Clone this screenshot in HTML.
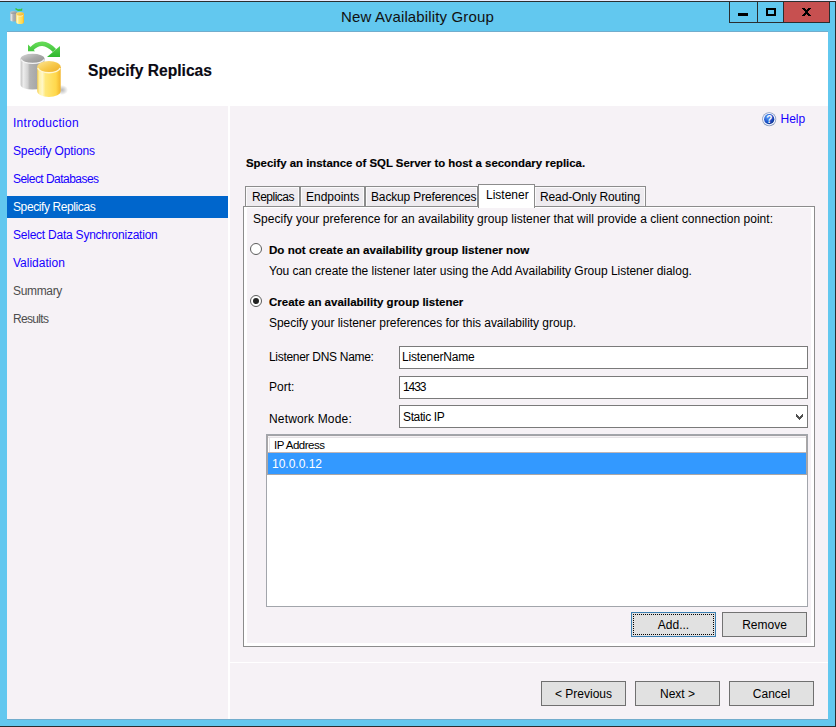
<!DOCTYPE html>
<html><head><meta charset="utf-8">
<style>
*{margin:0;padding:0;box-sizing:border-box}
html,body{width:836px;height:727px;overflow:hidden;background:#62c8ef;font-family:"Liberation Sans",sans-serif;font-size:12px;color:#000}
.a{position:absolute}
.t{position:absolute;white-space:nowrap;line-height:12px;font-size:12px}
.bd{-webkit-text-stroke:0.15px #000}
#topline{left:0;top:0;width:836px;height:1px;background:#e8eafc}
#topdark{left:0;top:1px;width:836px;height:1px;background:#2a2e30}
#rdark{left:835px;top:1px;width:1px;height:726px;background:#2a2e30}
#bdark{left:0;top:726px;width:836px;height:1px;background:#2a2e30}
#client{left:7px;top:31px;width:821px;height:689px;background:#f6f2f6;border-top:1px solid #72adcd;border-bottom:1px solid #72adcd}
#header{left:7px;top:32px;width:821px;height:74px;background:#fff}
.tb{position:absolute;top:2px;height:21px;border:1px solid #2a2e30;border-top:none}
#bmin{left:729px;width:29px;background:#62c8ef}
#bmax{left:757px;width:27px;background:#62c8ef}
#bclose{left:783px;width:47px;background:#c75050}
#sep{left:228px;top:106px;width:2px;height:613px;background:#fff}
#hsep{left:230px;top:662px;width:598px;height:1px;background:#fff}
.nav{left:14px;color:#1800ff}
#navsel{left:7px;top:196px;width:221px;height:22px;background:#0066cc}
.btn{position:absolute;height:25px;width:85px;background:#e1e1e1;border:1px solid #adadad;text-align:center;line-height:22px}
.tab{position:absolute;top:186px;height:20px;background:#eeebef;border:1px solid #8c8c8c;border-bottom:none;box-shadow:inset 1px 1px 0 #fbfafb,inset -1px 0 0 #fbfafb}
#panel{left:243px;top:206px;width:572px;height:441px;border:1px solid #8c8c8c;background:#fff}
#page{left:247px;top:208px;width:564px;height:435px;background:#f6f2f6}
.inp{position:absolute;left:399px;width:409px;height:23px;background:#fff;border:1px solid #7a7a7a}
.radio{position:absolute;left:250px;width:12px;height:12px;border-radius:50%;border:1px solid #5c5c5c;background:#fff}
</style></head><body>
<div class="a" id="topline"></div>
<div class="a" id="topdark"></div>
<div class="a" id="rdark"></div>
<div class="a" id="bdark"></div>

<!-- title bar -->
<svg class="a" style="left:0;top:0" width="30" height="30" viewBox="0 0 30 30">
  <path d="M10.2 12.5 L10.2 20 A3.4 1.5 0 0 0 17 20 L17 12.5 Z" fill="url(#gg)"/>
  <ellipse cx="13.6" cy="12.5" rx="3.4" ry="1.5" fill="url(#gt)"/>
  <path d="M16 14 L16 22 A4 2 0 0 0 24 22 L24 14 Z" fill="url(#yg)"/>
  <ellipse cx="20" cy="14" rx="4" ry="2" fill="url(#yt)"/>
  <path d="M16.6 15 A3.5 1.5 0 0 0 23.4 15" stroke="#fff7d0" stroke-width="0.8" fill="none"/>
  <path d="M15.5 8.6 Q18 11.2 20.5 9.3" stroke="#3cc23a" stroke-width="1.5" fill="none"/>
  <path d="M19 10.8 L22.2 10.8 L22.2 8 Z" fill="#3cc23a"/>
</svg>
<div class="t" style="left:341px;top:9px;font-size:15px;line-height:15px;color:#111;letter-spacing:0.14px">New Availability Group</div>
<div class="tb" id="bmin"><div class="a" style="left:8px;top:11px;width:10px;height:3px;background:#000"></div></div>
<div class="tb" id="bmax"><div class="a" style="left:8px;top:6px;width:10px;height:8px;border:2px solid #000"></div></div>
<div class="tb" id="bclose"><svg class="a" style="left:18px;top:6px" width="9" height="8" viewBox="0 0 9 8" shape-rendering="crispEdges"><path d="M0 0h3v1h-3zM6 0h3v1h-3zM1 1h3v1h-3zM5 1h3v1h-3zM2 2h5v1h-5zM3 3h3v1h-3zM3 4h3v1h-3zM2 5h5v1h-5zM1 6h3v1h-3zM5 6h3v1h-3zM0 7h3v1h-3zM6 7h3v1h-3z" fill="#000"/></svg></div>

<div class="a" id="client"></div>
<div class="a" id="header"></div>

<!-- header icon -->
<svg class="a" style="left:0;top:0" width="0" height="0">
  <defs>
    <linearGradient id="gg" x1="0" x2="1" y1="0" y2="0">
      <stop offset="0" stop-color="#c4c4c4"/><stop offset="0.12" stop-color="#ececec"/><stop offset="0.3" stop-color="#d2d2d2"/><stop offset="0.38" stop-color="#b4b4b4"/><stop offset="0.75" stop-color="#a4a4a4"/><stop offset="1" stop-color="#bdbdbd"/>
    </linearGradient>
    <linearGradient id="gt" x1="0" x2="1" y1="0" y2="1">
      <stop offset="0" stop-color="#d6d6d6"/><stop offset="0.5" stop-color="#a8a8a8"/><stop offset="1" stop-color="#8f8f8f"/>
    </linearGradient>
    <linearGradient id="yg" x1="0" x2="1" y1="0" y2="0">
      <stop offset="0" stop-color="#f6cf55"/><stop offset="0.1" stop-color="#fff2a6"/><stop offset="0.22" stop-color="#fff7c8"/><stop offset="0.35" stop-color="#ffe87a"/><stop offset="0.8" stop-color="#ffd84c"/><stop offset="1" stop-color="#f2b42a"/>
    </linearGradient>
    <linearGradient id="yt" x1="0" x2="1" y1="0" y2="1">
      <stop offset="0" stop-color="#fde79a"/><stop offset="0.5" stop-color="#f7c94a"/><stop offset="1" stop-color="#eeaa24"/>
    </linearGradient>
    <linearGradient id="ag" gradientUnits="userSpaceOnUse" x1="0" x2="0" y1="2" y2="19">
      <stop offset="0" stop-color="#6ee05e"/><stop offset="1" stop-color="#2eb82e"/>
    </linearGradient>
    <radialGradient id="sh" cx="0.5" cy="0.5" r="0.5"><stop offset="0" stop-color="#000" stop-opacity="0.28"/><stop offset="1" stop-color="#000" stop-opacity="0"/></radialGradient>
  </defs><symbol id="dbicon" viewBox="0 0 50 62">
  <ellipse cx="44" cy="52" rx="6" ry="5" fill="url(#sh)"/>
  <path d="M2.6 20.7 L2.6 46.7 A11.95 4.9 0 0 0 26.5 46.7 L26.5 20.7 Z" fill="url(#gg)"/>
  <ellipse cx="14.55" cy="20.7" rx="11.95" ry="4.9" fill="url(#gt)"/>
  <path d="M3.2 21.5 A11.4 4.3 0 0 0 25.9 21.5" stroke="#f4f4f4" stroke-width="1.3" fill="none"/>
  <path d="M19.2 29 L19.2 52.9 A11.75 6 0 0 0 42.7 52.9 L42.7 29 Z" fill="url(#yg)"/>
  <ellipse cx="30.95" cy="29" rx="11.75" ry="6" fill="url(#yt)"/>
  <path d="M19.8 30 A11.2 5.3 0 0 0 42.1 30" stroke="#fff7d0" stroke-width="1.4" fill="none"/>
  <path d="M13 11.5 Q24 -0.5 36.5 12.5" stroke="url(#ag)" stroke-width="4.4" fill="none"/>
  <path d="M10 6.5 L10 13.2 L17 13.2 Z" fill="url(#ag)"/>
  <path d="M29 19 L42 19 L42 8 Z" fill="url(#ag)"/>
</symbol></svg>
<svg class="a" style="left:18px;top:38px" width="50" height="62"><use href="#dbicon" width="50" height="62"/></svg>
<div class="t bd" style="left:88px;top:63px;font-size:15.6px;line-height:15px;font-weight:bold;color:#0a0a14">Specify Replicas</div>

<!-- nav -->
<div class="a" id="sep"></div>
<div class="a" id="navsel"></div>
<div class="t nav" style="top:117px;left:13px;letter-spacing:0.27px">Introduction</div>
<div class="t nav" style="top:145px;left:13px;letter-spacing:-0.14px">Specify Options</div>
<div class="t nav" style="top:173px;left:13px;letter-spacing:-0.53px">Select Databases</div>
<div class="t nav" style="top:201px;left:13px;color:#fff;letter-spacing:-0.4px">Specify Replicas</div>
<div class="t nav" style="top:229px;left:13px;letter-spacing:-0.23px">Select Data Synchronization</div>
<div class="t nav" style="top:257px;left:13px">Validation</div>
<div class="t" style="left:13px;top:285px;color:#4d4d4d;letter-spacing:-0.33px">Summary</div>
<div class="t" style="left:13px;top:313px;color:#4d4d4d;letter-spacing:-0.67px">Results</div>

<!-- help -->
<svg class="a" style="left:762px;top:112px" width="15" height="15" viewBox="0 0 15 15">
  <defs><radialGradient id="hg" cx="0.35" cy="0.3" r="0.75"><stop offset="0" stop-color="#5d9cf5"/><stop offset="0.6" stop-color="#1f55cc"/><stop offset="1" stop-color="#0c2f8e"/></radialGradient></defs>
  <circle cx="7.2" cy="7.2" r="7" fill="#8a9cc0"/>
  <circle cx="7.2" cy="7.2" r="6.2" fill="#f2f6ff"/>
  <circle cx="7.2" cy="7.2" r="5.1" fill="url(#hg)"/>
  <text x="7.3" y="11.2" text-anchor="middle" font-family="Liberation Sans" font-weight="bold" font-size="10" fill="#fff">?</text>
</svg>
<div class="t" style="left:780.5px;top:112.6px;color:#1800ff">Help</div>

<div class="t bd" style="left:246px;top:157px;font-size:11.4px;font-weight:bold">Specify an instance of SQL Server to host a secondary replica.</div>

<!-- tabs -->
<div class="a" id="panel"></div>
<div class="a" id="page"></div>
<div class="tab" style="left:245px;width:55px"></div>
<div class="tab" style="left:300px;width:65px"></div>
<div class="tab" style="left:365px;width:113px"></div>
<div class="tab" style="left:534px;width:112px"></div>
<div class="a" style="left:478px;top:184px;width:57px;height:24px;background:#fff;border:1px solid #8c8c8c;border-bottom:none"></div>
<div class="t" style="left:252px;top:191px;letter-spacing:-0.5px">Replicas</div>
<div class="t" style="left:306px;top:191px">Endpoints</div>
<div class="t" style="left:371px;top:191px;letter-spacing:-0.15px">Backup Preferences</div>
<div class="t" style="left:486px;top:189px">Listener</div>
<div class="t" style="left:540px;top:191px;letter-spacing:-0.12px">Read-Only Routing</div>

<div class="t" style="left:253px;top:213px;letter-spacing:0.03px">Specify your preference for an availability group listener that will provide a client connection point:</div>
<div class="radio" style="top:243px"></div>
<div class="t bd" style="left:269px;top:244px;font-size:11.6px;font-weight:bold">Do not create an availability group listener now</div>
<div class="t" style="left:269px;top:265px;letter-spacing:-0.025px">You can create the listener later using the Add Availability Group Listener dialog.</div>
<div class="radio" style="top:295px"><div class="a" style="left:2px;top:2px;width:6px;height:6px;border-radius:50%;background:#222"></div></div>
<div class="t bd" style="left:269px;top:296px;font-size:11.5px;font-weight:bold">Create an availability group listener</div>
<div class="t" style="left:269px;top:317px;letter-spacing:-0.05px">Specify your listener preferences for this availability group.</div>

<div class="t" style="left:269px;top:351px;letter-spacing:-0.3px">Listener DNS Name:</div>
<div class="t" style="left:269px;top:381px">Port:</div>
<div class="t" style="left:269px;top:413px;letter-spacing:0.17px">Network Mode:</div>
<div class="inp" style="top:346px"></div>
<div class="inp" style="top:376px"></div>
<div class="inp" style="top:405px"></div>
<div class="t" style="left:402px;top:351px;letter-spacing:-0.18px">ListenerName</div>
<div class="t" style="left:403px;top:381px;letter-spacing:-1.1px">1433</div>
<div class="t" style="left:403px;top:411px;letter-spacing:-0.37px">Static IP</div>
<svg class="a" style="left:796px;top:414px" width="7" height="6" viewBox="0 0 7 6" shape-rendering="crispEdges"><path d="M0 0h1v1h-1zM6 0h1v1h-1zM0 1h2v1h-2zM5 1h2v1h-2zM0 2h3v1h-3zM4 2h3v1h-3zM1 3h5v1h-5zM2 4h3v1h-3zM3 5h1v1h-1z" fill="#505050"/></svg>

<!-- listbox -->
<div class="a" style="left:266px;top:434px;width:542px;height:173px;background:#fff;border:1px solid #a2a5ab"></div>
<div class="a" style="left:267px;top:435px;width:540px;height:40px;border:1px solid #aaa6a6;border-top-color:#a3a3a6"></div>
<div class="a" style="left:268px;top:436px;width:538px;height:1px;background:#f6f3f6"></div>
<div class="a" style="left:268px;top:437px;width:538px;height:1px;background:#e6e3e6"></div>
<div class="a" style="left:269px;top:437px;width:1px;height:15px;background:#e6e3e6"></div>
<div class="a" style="left:268px;top:452px;width:538px;height:1px;background:#c0b6b6"></div>
<div class="t" style="left:274px;top:438.5px;font-size:11.5px;letter-spacing:-0.5px">IP Address</div>
<div class="a" style="left:268px;top:453px;width:538px;height:21px;background:#3399ff"></div>
<div class="t" style="left:272px;top:458px;color:#fff">10.0.0.12</div>

<div class="btn" style="left:631px;top:612px;border-color:#3c7fb1"><div class="a" style="left:1px;top:1px;width:81px;height:21px;border:1px dotted #000"></div><span class="a" style="left:0;top:6px;width:83px;text-align:center;line-height:12px">Add...</span></div>
<div class="btn" style="left:722px;top:612px;border-color:#737373"><span class="a" style="left:0;top:6px;width:83px;text-align:center;line-height:12px">Remove</span></div>

<div class="a" id="hsep"></div>
<div class="btn" style="left:541px;top:681px;border-color:#707070"><span class="a" style="left:0;top:6px;width:83px;text-align:center;line-height:12px">&lt; Previous</span></div>
<div class="btn" style="left:635px;top:681px;border-color:#707070"><span class="a" style="left:0;top:6px;width:83px;text-align:center;line-height:12px">Next &gt;</span></div>
<div class="btn" style="left:729px;top:681px;border-color:#707070"><span class="a" style="left:0;top:6px;width:83px;text-align:center;line-height:12px">Cancel</span></div>
</body></html>
